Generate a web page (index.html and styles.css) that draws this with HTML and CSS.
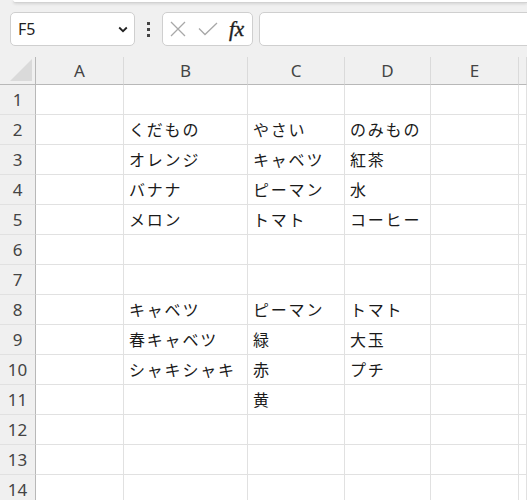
FILE: index.html
```html
<!DOCTYPE html>
<html lang="ja">
<head>
<meta charset="utf-8">
<link rel="stylesheet" href="styles.css">
</head>
<body>
<div class="topstrip"></div>
<div class="toolbar">
  <div class="namebox">
    <span class="nb-text">F5</span>
    <svg class="chev" width="10" height="7" viewBox="0 0 10 7"><path d="M1.2 1.5 L5 5.2 L8.8 1.5" fill="none" stroke="#222" stroke-width="1.8"/></svg>
  </div>
  <div class="dots"><i></i><i></i><i></i></div>
  <div class="fbtns">
    <svg width="16" height="16" viewBox="0 0 16 16"><path d="M1 1 L15 15 M15 1 L1 15" stroke="#a8a8a8" stroke-width="1.3" fill="none"/></svg>
    <svg width="20" height="14" viewBox="0 0 20 14"><path d="M1 6.5 L7 12.5 L19 1" stroke="#a8a8a8" stroke-width="1.3" fill="none"/></svg>
    <span class="fx">fx</span>
  </div>
  <div class="finput"></div>
</div>
<div class="sheet">
  <div class="c corner"><svg width="22" height="22" viewBox="0 0 22 22"><path d="M22 0 L22 22 L0 22 Z" fill="#dadada"/></svg></div>
  <div class="c ch">A</div><div class="c ch">B</div><div class="c ch">C</div><div class="c ch">D</div><div class="c ch">E</div><div class="c ch last"></div>

  <div class="c rh">1</div><div class="c"></div><div class="c"></div><div class="c"></div><div class="c"></div><div class="c"></div><div class="c"></div>
  <div class="c rh">2</div><div class="c"></div><div class="c">くだもの</div><div class="c">やさい</div><div class="c">のみもの</div><div class="c"></div><div class="c"></div>
  <div class="c rh">3</div><div class="c"></div><div class="c">オレンジ</div><div class="c">キャベツ</div><div class="c">紅茶</div><div class="c"></div><div class="c"></div>
  <div class="c rh">4</div><div class="c"></div><div class="c">バナナ</div><div class="c">ピーマン</div><div class="c">水</div><div class="c"></div><div class="c"></div>
  <div class="c rh">5</div><div class="c"></div><div class="c">メロン</div><div class="c">トマト</div><div class="c">コーヒー</div><div class="c"></div><div class="c"></div>
  <div class="c rh">6</div><div class="c"></div><div class="c"></div><div class="c"></div><div class="c"></div><div class="c"></div><div class="c"></div>
  <div class="c rh">7</div><div class="c"></div><div class="c"></div><div class="c"></div><div class="c"></div><div class="c"></div><div class="c"></div>
  <div class="c rh">8</div><div class="c"></div><div class="c">キャベツ</div><div class="c">ピーマン</div><div class="c">トマト</div><div class="c"></div><div class="c"></div>
  <div class="c rh">9</div><div class="c"></div><div class="c">春キャベツ</div><div class="c">緑</div><div class="c">大玉</div><div class="c"></div><div class="c"></div>
  <div class="c rh">10</div><div class="c"></div><div class="c">シャキシャキ</div><div class="c">赤</div><div class="c">プチ</div><div class="c"></div><div class="c"></div>
  <div class="c rh">11</div><div class="c"></div><div class="c"></div><div class="c">黄</div><div class="c"></div><div class="c"></div><div class="c"></div>
  <div class="c rh">12</div><div class="c"></div><div class="c"></div><div class="c"></div><div class="c"></div><div class="c"></div><div class="c"></div>
  <div class="c rh">13</div><div class="c"></div><div class="c"></div><div class="c"></div><div class="c"></div><div class="c"></div><div class="c"></div>
  <div class="c rh">14</div><div class="c"></div><div class="c"></div><div class="c"></div><div class="c"></div><div class="c"></div><div class="c"></div>
</div>
</body>
</html>
```
FILE: styles.css
```css
html, body {
  margin: 0;
  padding: 0;
  height: 100%;
  overflow: hidden;
}
body {
  background: #f0f0f0;
  font-family: "Noto Sans", "Noto Sans CJK JP", sans-serif;
}
.topstrip {
  height: 2px;
  margin-left: 13px;
  background: #fff;
  border-bottom: 1px solid #d2d2d2;
  border-bottom-left-radius: 6px;
  box-shadow: 0 1px 3px rgba(0,0,0,0.12);
}
.toolbar {
  display: flex;
  align-items: center;
  height: 34px;
  margin-top: 9px;
  padding-left: 10px;
}
.namebox {
  box-sizing: border-box;
  width: 125px;
  height: 34px;
  background: #fff;
  border: 1px solid #cfcfcf;
  border-radius: 5px;
  display: flex;
  align-items: center;
  justify-content: space-between;
  padding: 0 6px 0 7px;
}
.nb-text {
  font-size: 16px;
  color: #222;
}
.chev { display: block; }
.dots {
  width: 27px;
  display: flex;
  flex-direction: column;
  align-items: center;
  gap: 3px;
}
.dots i {
  display: block;
  width: 3px;
  height: 3px;
  background: #444;
}
.fbtns {
  box-sizing: border-box;
  width: 91px;
  height: 34px;
  background: #fff;
  border: 1px solid #cfcfcf;
  border-radius: 5px;
  display: flex;
  align-items: center;
  padding-left: 7px;
  gap: 12px;
}
.fx {
  font-family: "Liberation Serif", "DejaVu Serif", serif;
  font-style: italic;
  font-weight: normal;
  font-size: 21px;
  color: #1e1e1e;
  margin-left: -1px;
  -webkit-text-stroke: 0.4px #1e1e1e;
}
.finput {
  box-sizing: border-box;
  flex: 1;
  height: 34px;
  margin-left: 6px;
  margin-right: -10px;
  background: #fff;
  border: 1px solid #cfcfcf;
  border-radius: 5px;
}
.sheet {
  margin-top: 11px;
  display: grid;
  grid-template-columns: 36px 88px 124px 97px 86px 88px 1fr;
  grid-template-rows: 28px;
  grid-auto-rows: 30px;
  background: #fff;
}
.c {
  box-sizing: border-box;
  border-right: 1px solid #e1e1e1;
  border-bottom: 1px solid #e1e1e1;
  font-family: "Noto Sans CJK JP", sans-serif;
  font-size: 16px;
  letter-spacing: 1.8px;
  color: #1a1a1a;
  padding-left: 5px;
  padding-bottom: 2px;
  display: flex;
  align-items: center;
  white-space: nowrap;
  overflow: hidden;
}
.corner {
  background: #f0f0f0;
  border-right: 1px solid #b8b8b8;
  border-bottom: 1px solid #b8b8b8;
  padding: 0 3px 3px 0;
  justify-content: flex-end;
  align-items: flex-end;
}
.corner svg { display: block; }
.ch {
  background: #f0f0f0;
  border-right: 1px solid #dadada;
  border-bottom: 1px solid #b8b8b8;
  justify-content: center;
  padding: 0;
  letter-spacing: 0;
  font-family: "Noto Sans", sans-serif;
  font-size: 17px;
  color: #444;
}
.rh {
  background: #f0f0f0;
  border-right: 1px solid #b8b8b8;
  justify-content: center;
  padding: 0;
  letter-spacing: 0;
  font-family: "Noto Sans", sans-serif;
  font-size: 17px;
  color: #444;
}
```
